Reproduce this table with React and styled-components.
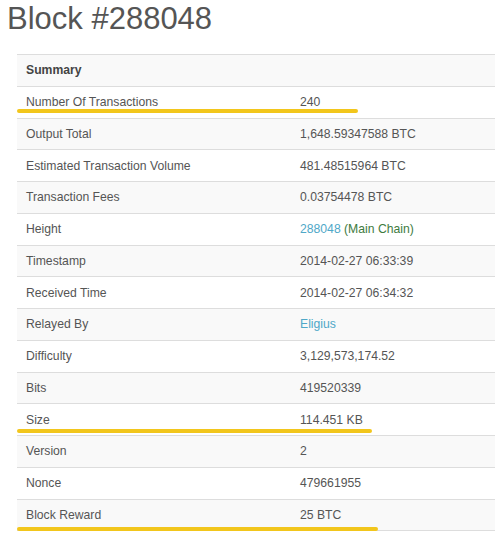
import styled, { createGlobalStyle } from 'styled-components';

const GlobalStyle = createGlobalStyle`
  html, body {
    margin: 0;
    padding: 0;
    background: #ffffff;
  }
  body {
    font-family: "Liberation Sans", Arial, sans-serif;
    color: #555555;
  }
`;

const Page = styled.div`
  width: 500px;
  padding-top: 2px;
`;

const Title = styled.h1`
  margin: 0 0 0 7px;
  height: 52px;
  line-height: 34px;
  font-size: 31px;
  font-weight: 400;
  color: #555555;
`;

const Table = styled.div`
  margin-left: 17px;
  width: 478px;
  border-bottom: 1px solid #dddddd;
`;

const Row = styled.div`
  position: relative;
  display: grid;
  grid-template-columns: 283px 1fr;
  align-items: center;
  height: 31.75px;
  box-sizing: border-box;
  border-top: 1px solid #dddddd;
  background: ${({ $striped }) => ($striped ? '#f9f9f9' : '#ffffff')};
  font-size: 12.2px;
  color: #555555;
`;

const Label = styled.div`
  padding-left: 9px;
  font-weight: ${({ $bold }) => ($bold ? 700 : 400)};
  color: ${({ $bold }) => ($bold ? '#444444' : '#555555')};
`;

const Value = styled.div``;

const Link = styled.span`
  color: #4fa8c8;
`;

const Chain = styled.span`
  color: #3e7b3e;
`;

const Highlight = styled.span`
  position: absolute;
  left: 0;
  bottom: ${({ $bottom }) => $bottom}px;
  width: ${({ $width }) => $width}px;
  height: 4px;
  border-radius: 2px;
  background: #f2c61c;
`;

const rows = [
  { label: 'Number Of Transactions', value: '240', hl: { width: 341, bottom: 5 } },
  { label: 'Output Total', value: '1,648.59347588 BTC' },
  { label: 'Estimated Transaction Volume', value: '481.48515964 BTC' },
  { label: 'Transaction Fees', value: '0.03754478 BTC' },
  {
    label: 'Height',
    value: (
      <>
        <Link>288048</Link> <Chain>(Main Chain)</Chain>
      </>
    ),
  },
  { label: 'Timestamp', value: '2014-02-27 06:33:39' },
  { label: 'Received Time', value: '2014-02-27 06:34:32' },
  { label: 'Relayed By', value: <Link>Eligius</Link> },
  { label: 'Difficulty', value: '3,129,573,174.52' },
  { label: 'Bits', value: '419520339' },
  { label: 'Size', value: '114.451 KB', hl: { width: 355, bottom: 2 } },
  { label: 'Version', value: '2' },
  { label: 'Nonce', value: '479661955' },
  { label: 'Block Reward', value: '25 BTC', hl: { width: 361, bottom: -1 } },
];

export default function App() {
  return (
    <Page>
      <GlobalStyle />
      <Title>Block #288048</Title>
      <Table>
        <Row $striped>
          <Label $bold>Summary</Label>
          <Value />
        </Row>
        {rows.map((r, i) => (
          <Row key={r.label} $striped={i % 2 === 1}>
            <Label>{r.label}</Label>
            <Value>{r.value}</Value>
            {r.hl && <Highlight $width={r.hl.width} $bottom={r.hl.bottom} />}
          </Row>
        ))}
      </Table>
    </Page>
  );
}
